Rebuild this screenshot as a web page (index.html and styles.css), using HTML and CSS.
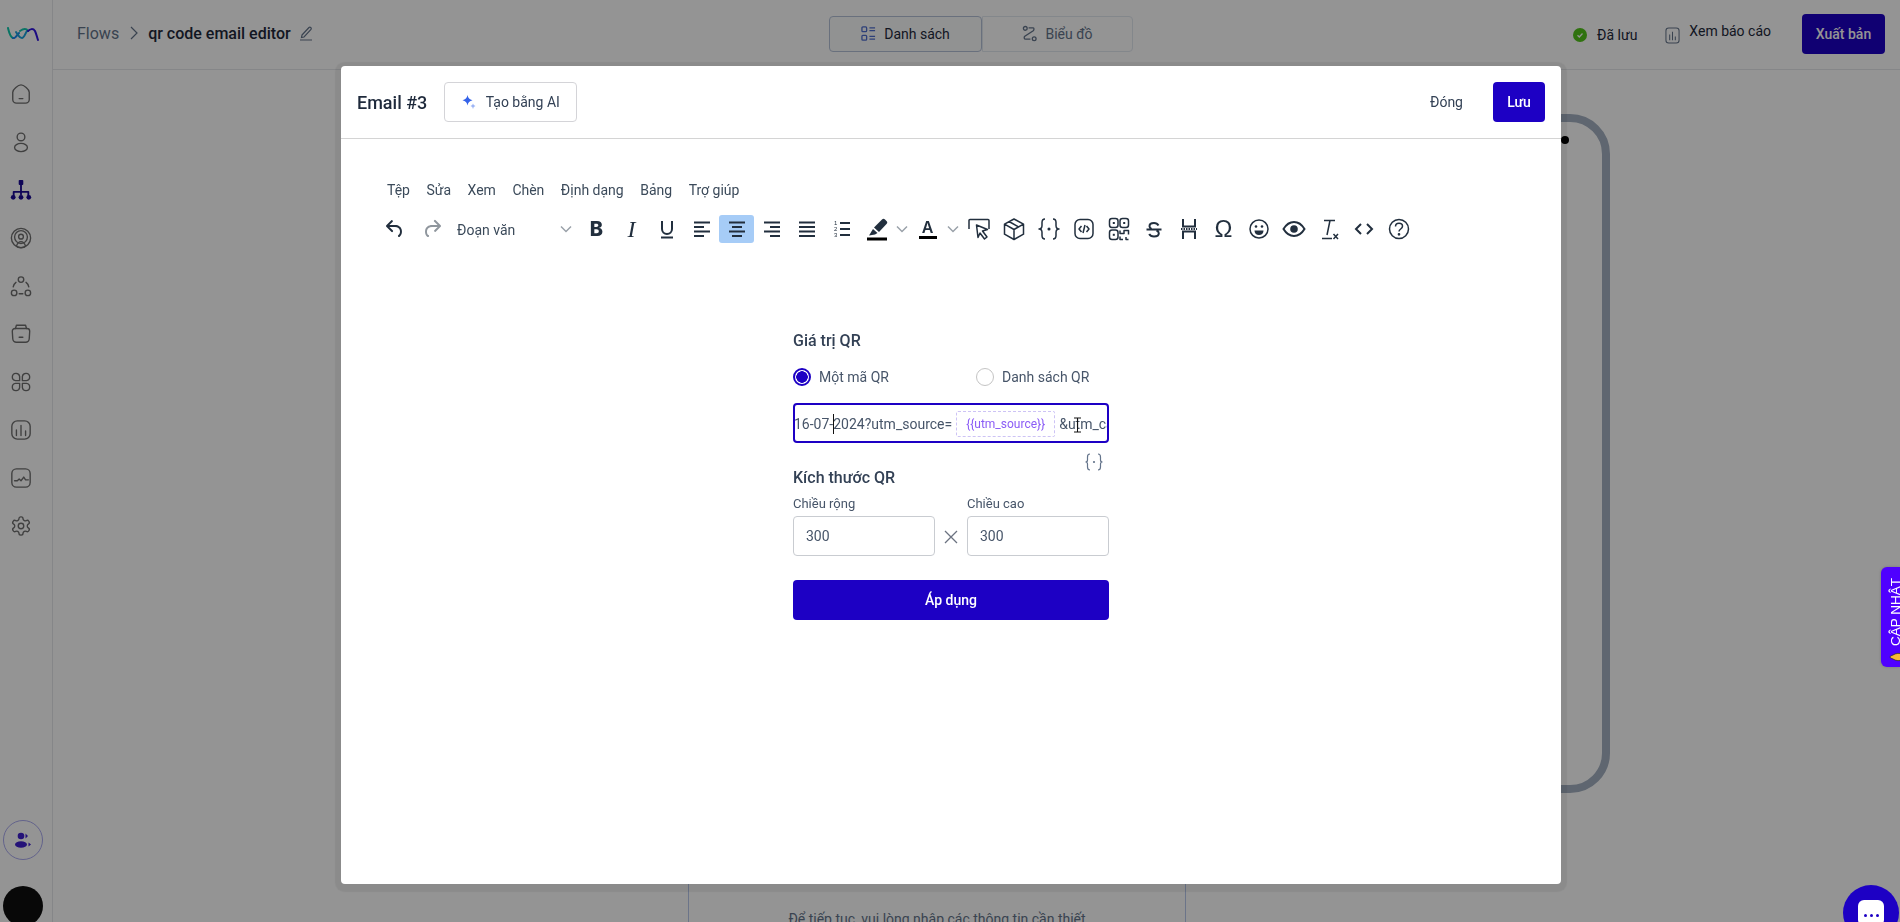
FILE: index.html
```html
<!DOCTYPE html>
<html lang="vi">
<head>
<meta charset="utf-8">
<title>qr code email editor</title>
<link rel="stylesheet" href="styles.css">
</head>
<body>
<div class="app">
  <aside class="sidebar">
    <svg class="logo" viewBox="0 0 32 14" fill="none" stroke-width="2" stroke-linecap="round"><path d="M1 1c1 4 2 9 5 10" stroke="#0fc9ad"/><path d="M6 11c2 1 4-3 6-5" stroke="#1a86f0"/><path d="M9 5c2 3 3 6 6 6 2 0 3-4 5-7" stroke="#1aa3dc"/><path d="M13 4c3-2 6-3 8 0" stroke="#14c9b0"/><path d="M21 4c2-2 5-3 7 0 1 2 2 6 3 9" stroke="#3014e0"/></svg>
    <nav class="side-nav">
      <svg class="side-ico" viewBox="0 0 24 24"><path d="M3 10c0-3 6-8 9-8s9 5 9 8v8a4 4 0 0 1-4 4H7a4 4 0 0 1-4-4z"/><path d="M10 17h4"/></svg>
      <svg class="side-ico" viewBox="0 0 24 24"><circle cx="12" cy="6.5" r="4.2"/><ellipse cx="12" cy="18" rx="7" ry="4.5"/></svg>
      <svg class="side-ico side-active" viewBox="0 0 24 24"><rect x="9.5" y="1" width="5" height="5.5" rx="1" class="solid"/><path d="M12 6v11M4 18v-4h16v4"/><circle cx="3.5" cy="20" r="2.6" class="solid"/><circle cx="12" cy="20" r="2.6" class="solid"/><circle cx="20.5" cy="20" r="2.6" class="solid"/></svg>
      <svg class="side-ico" viewBox="0 0 24 24"><circle cx="12" cy="12" r="10.5"/><circle cx="12" cy="11" r="7"/><circle cx="12" cy="10.5" r="2.6"/><path d="M7 21c1-3 3-5 5-5s4 2 5 5c-3 2-7 2-10 0z"/></svg>
      <svg class="side-ico" viewBox="0 0 24 24"><circle cx="12" cy="5" r="3"/><circle cx="4.5" cy="19.5" r="3"/><circle cx="19.5" cy="19.5" r="3"/><path d="M3.5 13c.4-2 1.500-4 3-5M20.500 13c-.4-2-1.500-4-3-5M10 20.500h4"/></svg>
      <svg class="side-ico" viewBox="0 0 24 24"><path d="M6 6l1-3.500h10L18 6"/><path d="M2.500 9a3 3 0 0 1 3-3h13a3 3 0 0 1 3 3l-.5 8a4 4 0 0 1-4 4H7a4 4 0 0 1-4-4z"/><path d="M10 15.500h4"/></svg>
      <svg class="side-ico" viewBox="0 0 24 24"><path d="M10.500 10.500H6a4 4 0 1 1 4.500-4.500z"/><path d="M13.500 10.500V6A4 4 0 1 1 18 10.500z"/><path d="M10.500 13.500V18A4 4 0 1 1 6 13.500z"/><path d="M13.500 13.500H18a4 4 0 1 1-4.500 4.500z"/></svg>
      <svg class="side-ico" viewBox="0 0 24 24"><rect x="2" y="2" width="20" height="20" rx="6"/><path d="M7 12v6M12 7v11M17 13v5"/></svg>
      <svg class="side-ico" viewBox="0 0 24 24"><rect x="2" y="2" width="20" height="20" rx="5"/><path d="M5 15h3l2-2 2 2 3-4 2 3h3"/></svg>
      <svg class="side-ico" viewBox="0 0 24 24"><path d="M12.220 2h-.44a2 2 0 0 0-2 2v.18a2 2 0 0 1-1 1.730l-.43.25a2 2 0 0 1-2 0l-.15-.08a2 2 0 0 0-2.730.73l-.22.38a2 2 0 0 0 .73 2.730l.15.1a2 2 0 0 1 1 1.720v.51a2 2 0 0 1-1 1.740l-.15.09a2 2 0 0 0-.73 2.730l.22.38a2 2 0 0 0 2.730.73l.15-.08a2 2 0 0 1 2 0l.43.25a2 2 0 0 1 1 1.730V20a2 2 0 0 0 2 2h.44a2 2 0 0 0 2-2v-.18a2 2 0 0 1 1-1.730l.43-.25a2 2 0 0 1 2 0l.15.08a2 2 0 0 0 2.730-.73l.22-.39a2 2 0 0 0-.73-2.730l-.15-.08a2 2 0 0 1-1-1.740v-.5a2 2 0 0 1 1-1.740l.15-.09a2 2 0 0 0 .73-2.730l-.22-.38a2 2 0 0 0-2.730-.73l-.15.08a2 2 0 0 1-2 0l-.43-.25a2 2 0 0 1-1-1.730V4a2 2 0 0 0-2-2z"/><circle cx="12" cy="12" r="3"/></svg>
    </nav>
    <div class="side-foot">
      <div class="team"><svg viewBox="0 0 18 16" class="team-ico"><circle cx="7" cy="4" r="3.300"/><ellipse cx="7" cy="12.500" rx="6" ry="3.200"/><path d="M11.500 1.500l2.500 2.500-2.500 2.500zM14.500 10.500l2.500 2-2.500 2z"/></svg></div>
      <div class="avatar"></div>
    </div>
  </aside>
  <main class="main">
    <header class="topbar">
      <div class="crumbs">
        <span class="crumb">Flows</span>
        <svg class="crumb-sep" viewBox="0 0 10 16"><path d="M2 2l6 6-6 6"/></svg>
        <span class="crumb-title">qr code email editor</span>
        <svg class="crumb-edit" viewBox="0 0 14 16"><path d="M3 10L10 2.500c1-1 3 .5 2 2L5 12l-2.500.5zM1 15h12"/></svg>
      </div>
      <div class="tabs">
        <div class="tab tab-on"><svg class="tab-ico" viewBox="0 0 16 18"><rect x="1" y="2" width="5" height="5" rx="1"/><rect x="1" y="11" width="5" height="5" rx="1"/><path d="M9 3h6M9 6h6M9 12h6M9 15h6"/></svg>Danh sách</div>
        <div class="tab"><svg class="tab-ico tab-ico-off" viewBox="0 0 16 18"><circle cx="3.500" cy="3.500" r="2"/><circle cx="13" cy="14.500" r="2"/><path d="M7 3h5c1 0 1 2 0 3L3 12c-1 1-1 3 1 3h5"/></svg>Biểu đồ</div>
      </div>
      <div class="top-actions">
        <div class="saved"><svg class="saved-ico" viewBox="0 0 14 14"><circle cx="7" cy="7" r="7"/><path d="M4.500 7.200l1.800 1.800 3.200-3.500"/></svg>Đã lưu</div>
        <div class="report"><svg class="report-ico" viewBox="0 0 16 18"><rect x="1" y="1" width="14" height="16" rx="3"/><path d="M5 8v6M8 5v9M11 10v4"/></svg><span class="report-text">Xem báo cáo</span></div>
        <button class="btn-primary btn-publish">Xuất bản</button>
      </div>
    </header>
    <section class="canvas">
      <div class="flow-frame"></div>
      <span class="flow-dot"></span>
      <div class="flow-node">Để tiếp tục, vui lòng nhập các thông tin cần thiết</div>
    </section>
  </main>
</div>

<div class="overlay"></div>

<div class="modal">
  <header class="modal-head">
    <div class="modal-left">
      <h2 class="modal-title">Email #3</h2>
      <button class="btn-ai"><svg class="ai-ico" viewBox="0 0 14 14"><path class="ai-a" d="M5.500 0Q6.200 4.300 10.500 5.200 6.200 6 5.500 10.500 4.800 6 .5 5.200 4.800 4.300 5.500 0z"/><path class="ai-b" d="M11 8.500Q11.300 10.400 13.500 11 11.300 11.500 11 14 10.700 11.500 8.500 11 10.700 10.400 11 8.500z"/></svg>Tạo bằng AI</button>
    </div>
    <div class="modal-right">
      <span class="modal-close">Đóng</span>
      <button class="btn-primary btn-save">Lưu</button>
    </div>
  </header>
  <div class="modal-body">
    <div class="menu">
      <span>Tệp</span><span>Sửa</span><span>Xem</span><span>Chèn</span><span>Định dạng</span><span>Bảng</span><span>Trợ giúp</span>
    </div>
    <div class="toolbar">
      <span class="tb"><svg viewBox="0 0 24 24" class="fill"><path d="M6.400 8H12c3.700 0 6.200 2 6.800 5.100.6 2.700-.4 5.600-2.300 6.800a1 1 0 0 1-1-1.800c1.100-.7 1.800-2.700 1.400-4.600-.5-2.100-2.100-3.500-4.900-3.500H6.400l3.300 3.300a1 1 0 1 1-1.400 1.400l-5-5a1 1 0 0 1 0-1.400l5-5a1 1 0 0 1 1.400 1.400L6.400 8z"/></svg></span>
      <span class="tb tb-redo tb-off"><svg viewBox="0 0 24 24" class="fill"><path d="M17.600 10H12c-2.800 0-4.400 1.400-4.900 3.500-.4 2 .3 4 1.400 4.600a1 1 0 1 1-1 1.800c-2-1.200-2.900-4.100-2.300-6.800.6-3 3-5.100 6.800-5.100h5.600l-3.300-3.300a1 1 0 1 1 1.400-1.400l5 5a1 1 0 0 1 0 1.400l-5 5a1 1 0 0 1-1.400-1.400l3.300-3.300z"/></svg></span>
      <span class="tb-select"><span class="tb-select-text">Đoạn văn</span><svg class="chev" viewBox="0 0 12 8"><path d="M1 1.500l5 5 5-5"/></svg></span>
      <span class="tb tb-letter tb-b">B</span>
      <span class="tb tb-letter tb-i">I</span>
      <span class="tb"><svg viewBox="0 0 24 24" class="line"><path d="M7 4v8a5 5 0 0 0 10 0V4M6 20.500h12"/></svg></span>
      <span class="tb"><svg viewBox="0 0 24 24" class="line"><path d="M4 5.500h16M4 10h10M4 14.500h16M4 19h10"/></svg></span>
      <span class="tb tb-on"><svg viewBox="0 0 24 24" class="line"><path d="M4 5.500h16M7 10h10M4 14.500h16M7 19h10"/></svg></span>
      <span class="tb"><svg viewBox="0 0 24 24" class="line"><path d="M4 5.500h16M10 10h10M4 14.500h16M10 19h10"/></svg></span>
      <span class="tb"><svg viewBox="0 0 24 24" class="line"><path d="M4 5.500h16M4 10h16M4 14.500h16M4 19h16"/></svg></span>
      <span class="tb"><svg viewBox="0 0 24 24" class="line"><text x="4" y="8" class="num">1</text><text x="4" y="14" class="num">2</text><text x="4" y="20" class="num">3</text><path d="M10 6h10M10 12h10M10 18h10"/></svg></span>
      <span class="tb"><svg viewBox="0 0 24 24" class="fill"><path d="M17 2.500c1-1 2-1 3 0l1.500 1.500c1 1 1 2 0 3L14 15l-5-4.500z"/><path d="M8 12l4.500 4-2.500 1.500-6 1z"/><rect x="2" y="20.500" width="20" height="3" class="black"/></svg></span>
      <span class="tb-more"><svg class="chev" viewBox="0 0 12 8"><path d="M1 1.500l5 5 5-5"/></svg></span>
      <span class="tb tb-color"><span class="tb-a">A</span><span class="tb-bar"></span></span>
      <span class="tb-more"><svg class="chev" viewBox="0 0 12 8"><path d="M1 1.500l5 5 5-5"/></svg></span>
      <span class="tb"><svg viewBox="0 0 24 24" class="thin"><path d="M2 12V3.500a1 1 0 0 1 1-1h18a1 1 0 0 1 1 1V12"/><path d="M9.500 8l11 4.500-5 1.500 4.500 6-2.500 2-4.500-6-2 4.500z"/></svg></span>
      <span class="tb"><svg viewBox="0 0 24 24" class="thin"><path d="M12 2l9.500 5.200v10L12 22.500l-9.500-5.300v-10zM2.500 7.200L12 12.500l9.500-5.300M12 12.500v10M7 4.500l9.500 5.300"/></svg></span>
      <span class="tb"><svg viewBox="0 0 24 24" class="thin"><path d="M8 2C5.500 2 5 3.500 5 5.500v3C5 10.500 4 12 2 12c2 0 3 1.500 3 3.500v3C5 20.500 5.500 22 8 22M16 2c2.500 0 3 1.500 3 3.500v3c0 2 1 3.500 3 3.500-2 0-3 1.500-3 3.500v3c0 2-.5 3.500-3 3.500"/><circle cx="12" cy="12" r=".8"/></svg></span>
      <span class="tb"><svg viewBox="0 0 24 24" class="thin"><rect x="3" y="2.500" width="18" height="19" rx="5"/><path d="M9.500 9l-2.500 3 2.500 3M14.500 9l2.500 3-2.500 3M13 8l-2 8"/></svg></span>
      <span class="tb"><svg viewBox="0 0 24 24" class="thin"><rect x="2.500" y="1.500" width="8.500" height="9" rx="2.500"/><rect x="13" y="1.500" width="8.500" height="9" rx="2.500"/><rect x="2.500" y="13" width="8.500" height="9.500" rx="2.500"/><rect x="5.800" y="5" width="2" height="2" class="dotq"/><rect x="16.200" y="5" width="2" height="2" class="dotq"/><rect x="5.800" y="16.800" width="2" height="2" class="dotq"/><path d="M13 13.500v3h4v-3h4.500v4M13 19.500v3h3M19 20v2.500h2.500"/></svg></span>
      <span class="tb"><svg viewBox="0 0 24 24" class="line"><path d="M16.500 8.500c-.8-1.500-2.500-2.500-4.500-2.500-2.700 0-4.500 1.300-4.500 3.200 0 1.200.7 2 2 2.600M4.500 12.500h15M14.500 13.500c1.500.6 2.300 1.400 2.300 2.800 0 1.900-2 3.200-4.800 3.200-2.200 0-4-.9-4.800-2.500"/></svg></span>
      <span class="tb"><svg viewBox="0 0 24 24" class="line"><path d="M6 2v7.500h12V2M6 22v-7.500h12V22"/><path class="dash" d="M4 12h16"/></svg></span>
      <span class="tb tb-letter tb-omega">Ω</span>
      <span class="tb"><svg viewBox="0 0 24 24" class="thin"><circle cx="12" cy="12" r="9"/><circle cx="9" cy="9.500" r="1.300" class="solid-i"/><circle cx="15" cy="9.500" r="1.300" class="solid-i"/><path d="M7.500 13.500h9c0 3-2 4.500-4.500 4.500s-4.500-1.500-4.500-4.500z" class="solid-i"/></svg></span>
      <span class="tb"><svg viewBox="0 0 24 24" class="line"><path d="M1.500 12C4.500 7 8 5 12 5s7.500 2 10.500 7c-3 5-6.500 7-10.500 7s-7.500-2-10.500-7z"/><circle cx="12" cy="12" r="3.800" class="solid-i"/></svg></span>
      <span class="tb"><svg viewBox="0 0 24 24" class="thin"><path d="M7 3.500h11M13 3.500L10 18M5 21.500h10M16.500 17l4.500 5M21 17l-4.500 5"/></svg></span>
      <span class="tb"><svg viewBox="0 0 24 24" class="line"><path d="M9 7l-5 5 5 5M15 7l5 5-5 5"/></svg></span>
      <span class="tb"><svg viewBox="0 0 24 24" class="thin"><circle cx="12" cy="12" r="9.500"/><path d="M8.500 9.500C8.500 7.500 10 6.300 12 6.300s3.500 1.200 3.500 3c0 2.700-3.500 2.700-3.500 5.200"/><circle cx="12" cy="17.300" r=".6"/></svg></span>
    </div>
    <form class="qr-form">
      <h3 class="qr-title">Giá trị QR</h3>
      <div class="radios">
        <label class="radio radio-first"><span class="dot dot-on"></span>Một mã QR</label>
        <label class="radio"><span class="dot"></span>Danh sách QR</label>
      </div>
      <div class="qr-input"><span class="qr-line">16-07-<i class="caret"></i>2024?utm_source=<span class="chip">{{utm_source}}</span>&amp;utm_campaign=</span><svg class="ibeam" viewBox="0 0 9 16"><path d="M1 1h7M4.500 1v14M1 15h7"/></svg></div>
      <div class="var-row"><svg class="var-ico" viewBox="0 0 20 20"><path d="M6 2C4 2 3.500 3 3.500 5v3c0 1-.7 2-2 2 1.300 0 2 1 2 2v3c0 2 .5 3 2.500 3M14 2c2 0 2.500 1 2.500 3v3c0 1 .7 2 2 2-1.300 0-2 1-2 2v3c0 2-.5 3-2.500 3"/><circle cx="10" cy="10" r=".5"/></svg></div>
      <h3 class="qr-title qr-title-size">Kích thước QR</h3>
      <div class="size-row">
        <div class="size-field"><label class="size-label">Chiều rộng</label><div class="size-input">300</div></div>
        <svg class="times" viewBox="0 0 14 14"><path d="M1 1l12 12M13 1L1 13"/></svg>
        <div class="size-field"><label class="size-label">Chiều cao</label><div class="size-input">300</div></div>
      </div>
      <button class="btn-primary btn-apply" type="button">Áp dụng</button>
    </form>
  </div>
</div>

<div class="update-tab"><span class="update-text">CẬP NHẬT</span><svg class="bell" viewBox="0 0 16 16"><path d="M1 8c0-1 2-1.500 3-2 3-2 7-2 9-1v6c-2 1-6 1-9-1-1-.5-3-1-3-2z"/></svg></div>
<div class="chat"><span class="chat-bubble"><i></i><i></i><i></i></span></div>
</body>
</html>
```
FILE: styles.css
```css
* { box-sizing: border-box; }
html, body { margin: 0; height: 100%; overflow: hidden; }
body { font-family: Roboto, "Noto Sans", sans-serif; color: #1e293b; background: #fff; }
h2, h3 { margin: 0; font-weight: 500; }
button { font-family: inherit; cursor: pointer; }

.app { display: flex; height: 922px; overflow: hidden; }
.sidebar { width: 53px; flex: none; border-right: 1px solid #e5e7eb; display: flex; flex-direction: column; align-items: flex-start; }
.logo { width: 32px; height: 14px; margin: 27px 0 0 7px; flex: none; }
.side-nav { display: flex; flex-direction: column; gap: 26px; margin-top: 42px; padding-left: 10px; }
.side-ico { width: 22px; height: 22px; fill: none; stroke: #6f6f6f; stroke-width: 1.5; stroke-linecap: round; stroke-linejoin: round; }
.side-active { stroke: #1a0a96; stroke-width: 2; }
.side-active .solid { fill: #1a0a96; stroke: none; }
.side-foot { margin-top: auto; display: flex; flex-direction: column; gap: 26px; padding-left: 3px; height: 102px; flex: none; }
.team { width: 40px; height: 40px; border-radius: 50%; border: 1.500px solid #aaaaf0; display: flex; align-items: center; justify-content: center; flex: none; }
.team-ico { width: 18px; height: 16px; fill: #3f1fcf; }
.avatar { width: 40px; height: 40px; border-radius: 50%; background: #0e0e0e; flex: none; }

.main { flex: 1; display: flex; flex-direction: column; min-width: 0; }
.topbar { height: 70px; flex: none; border-bottom: 1px solid #e5e7eb; display: grid; grid-template-columns: 1fr auto 1fr; align-items: center; padding: 0 15px 3px 24px; }
.crumbs { display: flex; align-items: center; font-size: 16px; }
.crumb { color: #64748b; font-weight: 400; }
.crumb-sep { width: 10px; height: 16px; margin: 0 9px 0 10px; fill: none; stroke: #64748b; stroke-width: 1.200; }
.crumb-title { font-weight: 500; font-size: 16px; color: #1e293b; }
.crumb-edit { width: 14px; height: 16px; margin-left: 8px; fill: none; stroke: #64748b; stroke-width: 1.200; }
.tabs { display: flex; height: 36px; margin-top: 1px; }
.tab { width: 151px; display: flex; align-items: center; justify-content: center; gap: 8px; font-size: 14px; color: #64748b; border: 1px solid #e2e8f0; border-radius: 0 4px 4px 0; }
.tab-on { width: 153px; color: #1e293b; background: #fafbfc; border-color: #b5c2d8; border-radius: 4px; }
.tab-ico { width: 15px; height: 17px; fill: none; stroke: #4f6fcf; stroke-width: 1.400; }
.tab-ico-off { stroke: #64748b; }
.top-actions { display: flex; align-items: center; justify-content: flex-end; gap: 31px; font-size: 14px; }
.saved { display: flex; align-items: center; gap: 10px; margin: 4px -3px 0 0; }
.saved-ico { width: 14px; height: 14px; }
.saved-ico circle { fill: #52c41a; }
.saved-ico path { fill: none; stroke: #fff; stroke-width: 1.300; }
.report { display: flex; align-items: center; gap: 9px; }
.report-ico { width: 15px; height: 17px; fill: none; stroke: #64748b; stroke-width: 1.100; margin-top: 4px; }
.report-text { margin-top: -4px; }
.btn-primary { background: #1d00c4; color: #fff; border: 0; border-radius: 4px; font-size: 14px; font-weight: 500; }
.btn-publish { width: 83px; height: 40px; margin-top: 1px; }

.canvas { flex: 1; position: relative; }
.flow-frame { position: absolute; left: 1000px; top: 44px; width: 557px; height: 679px; border: 8px solid #a4b0c1; border-radius: 40px; }
.flow-dot { position: absolute; left: 1508px; top: 66px; width: 8px; height: 8px; border-radius: 50%; background: #000; }
.flow-node { position: absolute; left: 635px; top: 780px; width: 498px; height: 200px; border: 1px solid #b9c8ec; text-align: center; padding-top: 60px; font-size: 14px; color: #64748b; }

.overlay { position: fixed; inset: 0; background: rgba(0, 0, 0, .42); }

.modal { position: absolute; left: 341px; top: 66px; width: 1220px; height: 818px; background: #fff; border-radius: 4px; box-shadow: 0 2px 1px 6px rgba(0, 0, 0, .06); display: flex; flex-direction: column; }
.modal-head { height: 73px; flex: none; border-bottom: 1px solid #d4d4d4; display: flex; align-items: center; justify-content: space-between; padding: 0 16px; }
.modal-left { display: flex; align-items: center; gap: 17px; }
.modal-title { font-size: 18px; font-weight: 500; color: #1e293b; }
.btn-ai { height: 40px; width: 133px; background: #fff; border: 1px solid #d4d4d8; border-radius: 4px; display: flex; align-items: center; justify-content: center; gap: 10px; font-size: 14px; color: #334155; }
.ai-ico { width: 14px; height: 14px; }
.ai-a { fill: #3563e9; }
.ai-b { fill: #9db5f5; }
.modal-right { display: flex; align-items: center; gap: 30px; }
.modal-close { font-size: 14px; color: #334155; }
.btn-save { width: 52px; height: 40px; }

.modal-body { flex: 1; padding: 41px 0 0 46px; }
.menu { display: flex; height: 20px; align-items: center; font-size: 14px; color: #3b4a5a; }
.menu span { margin-right: 16.500px; }
.toolbar { display: flex; align-items: center; height: 28px; margin: 15px 0 0 -10px; color: #222f3e; }
.tb { width: 35px; height: 28px; flex: none; display: flex; align-items: center; justify-content: center; border-radius: 3px; }
.tb svg { width: 24px; height: 24px; }
.tb-redo { margin-left: 2px; }
.tb-off { opacity: .5; }
.tb-on { background: #a6ccf7; }
.fill { fill: #222f3e; }
.black { fill: #000; }
.line { fill: none; stroke: #222f3e; stroke-width: 2; }
.thin { fill: none; stroke: #222f3e; stroke-width: 1.500; stroke-linejoin: round; }
.dash { stroke-dasharray: 1.500 1; }
.num { font-size: 6px; fill: #222f3e; stroke: none; font-family: "Liberation Sans", sans-serif; }
.dotq { fill: #222f3e; stroke: none; }
.solid-i { fill: #222f3e; stroke: none; }
.tb-select { width: 130px; flex: none; display: flex; align-items: center; justify-content: space-between; padding: 0 7px 0 8px; font-size: 14px; color: #3b4a5a; }
.tb-select-text { margin-top: 2px; }
.chev { width: 12px; height: 8px; fill: none; stroke: #9aa1a9; stroke-width: 1.500; }
.tb-more { width: 16px; flex: none; display: flex; justify-content: center; }
.tb-letter { color: #222f3e; }
.tb-b { font: 800 20px Inter, sans-serif; }
.tb-i { font: italic 400 24px "Liberation Serif", serif; }
.tb-omega { font: 400 24px "Liberation Sans", sans-serif; }
.tb-color { flex-direction: column; gap: 1px; }
.tb-a { font: 600 16px/15px Inter, sans-serif; }
.tb-bar { width: 18px; height: 3px; background: #000; }

.qr-form { width: 316px; margin: 88px 0 0 406px; }
.qr-title { font-size: 16px; line-height: 20px; font-weight: 500; color: #334155; }
.radios { display: flex; margin-top: 17px; }
.radio { display: flex; align-items: center; gap: 8px; font-size: 14px; color: #475569; }
.radio-first { width: 183px; }
.dot { width: 18px; height: 18px; border-radius: 50%; border: 1px solid #c4c4c4; flex: none; }
.dot-on { border: 2px solid #1d00c4; background: radial-gradient(circle, #1d00c4 0 5.500px, transparent 6px); }
.qr-input { position: relative; height: 40px; margin-top: 17px; border: 2px solid #1d00c4; border-radius: 4px; overflow: hidden; display: flex; align-items: center; font-size: 14px; color: #475569; white-space: nowrap; padding-top: 1px; }
.qr-line { display: flex; align-items: center; margin-left: -1px; }
.caret { display: inline-block; width: 1px; height: 20px; margin-right: -1px; background: #111; }
.chip { height: 26px; margin: 0 4px; padding: 0 9px; display: inline-flex; align-items: center; border: 1px dashed #cdc3f5; border-radius: 2px; font-size: 12px; color: #8b5cf6; }
.ibeam { position: absolute; left: 278px; top: 12px; width: 9px; height: 16px; fill: none; stroke: #111; stroke-width: 1; }
.var-row { height: 20px; margin-top: 9px; display: flex; justify-content: flex-end; padding-right: 4px; }
.var-ico { width: 22px; height: 20px; fill: none; stroke: #64748b; stroke-width: 1.200; }
.qr-title-size { margin-top: -4px; }
.size-row { display: flex; align-items: flex-end; margin-top: 7px; }
.size-field { width: 142px; flex: none; }
.size-label { display: block; font-size: 13px; line-height: 18px; color: #475569; }
.size-input { height: 40px; margin-top: 3px; border: 1px solid #c9ccd1; border-radius: 4px; padding-left: 12px; display: flex; align-items: center; font-size: 14px; color: #475569; }
.times { width: 14px; height: 14px; flex: none; margin: 0 9px 12px 9px; fill: none; stroke: #6b7280; stroke-width: 1.300; }
.btn-apply { display: block; width: 100%; height: 40px; margin-top: 24px; }

.update-tab { position: absolute; right: 0; top: 567px; width: 19px; height: 100px; background: #4f00ff; border-radius: 6px 0 0 6px; box-shadow: 0 0 3px rgba(0, 0, 0, .2); overflow: hidden; display: flex; flex-direction: column; align-items: flex-start; padding: 11px 0 0 8px; }
.update-text { writing-mode: vertical-rl; transform: rotate(180deg); font: 400 13.500px/14px "Liberation Sans", sans-serif; color: #fff; white-space: nowrap; flex: none; }
.bell { width: 16px; height: 16px; fill: #f7b733; stroke: #222; stroke-width: .7; margin-top: 3px; flex: none; }
.chat { position: absolute; left: 1843px; top: 885px; width: 56px; height: 56px; border-radius: 50%; background: #1d00c4; display: flex; justify-content: center; padding-top: 15px; }
.chat-bubble { width: 26px; height: 26px; background: #fff; border-radius: 6px; display: flex; justify-content: center; align-items: center; gap: 3px; padding-top: 4px; }
.chat-bubble i { width: 3px; height: 3px; border-radius: 50%; background: #1d00c4; }
```
